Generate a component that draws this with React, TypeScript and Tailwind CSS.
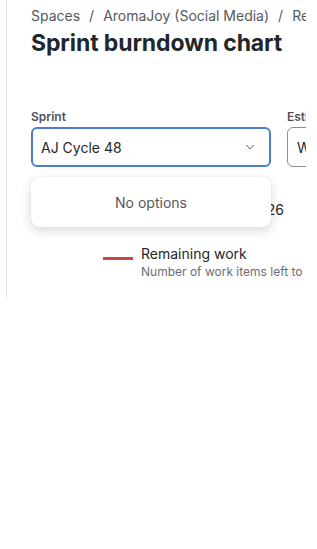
import React from 'react';
import { ChevronDown } from 'lucide-react';

export default function App() {
  return (
    <div className="w-[317px] h-[549px] bg-white overflow-hidden font-['Inter',sans-serif]">
      <div className="ml-[6px] w-[300px] h-[298px] border-l border-[#e4e4e4] overflow-hidden">
        <div className="w-[520px] pl-[24px] pt-[6px]">
          <nav className="flex items-center gap-[9px] text-[14px] leading-[20px] text-[#55595e] whitespace-nowrap">
            <span>Spaces</span>
            <span>/</span>
            <span>AromaJoy (Social Media)</span>
            <span>/</span>
            <span>Reports</span>
          </nav>
          <h1 className="mt-[1px] text-[23px] leading-[32px] font-bold text-[#22272b] tracking-[-0.1px]">
            Sprint burndown chart
          </h1>

          <div className="mt-[50px] flex gap-[16px]">
            <div className="w-[240px] relative">
              <label className="block text-[12px] leading-[16px] font-semibold text-[#505258]">Sprint</label>
              <div className="mt-[2px] h-[40px] rounded-[6px] border-2 border-[#4c7ccb] flex items-center justify-between pl-[8px] pr-[12px]">
                <span className="text-[14px] text-[#22272b]">AJ Cycle 48</span>
                <ChevronDown className="w-[14px] h-[14px] text-[#6b6e76]" strokeWidth={1.75} />
              </div>
              <div className="absolute left-0 top-[68px] w-[240px] h-[50px] rounded-[8px] bg-white shadow-[0_4px_12px_rgba(0,0,0,0.15),0_0_1px_rgba(0,0,0,0.18)] flex items-center justify-center z-10">
                <span className="text-[14px] text-[#55595e]">No options</span>
              </div>
            </div>
            <div className="w-[200px]">
              <label className="block text-[12px] leading-[16px] font-semibold text-[#505258]">Estimation</label>
              <div className="mt-[2px] h-[40px] rounded-[6px] border border-[#8c8f97] flex items-center pl-[9px]">
                <span className="text-[14px] text-[#22272b]">Work items</span>
              </div>
            </div>
          </div>

          <div className="mt-[33px] w-[253px] text-right text-[14px] leading-[20px] text-[#22272b] whitespace-nowrap">
            Mar 13, 2026 – Mar 26
          </div>

          <div className="mt-[24px] pl-[72px] flex items-start gap-[8px]">
            <span className="mt-[13px] w-[30px] h-[3px] bg-[#c9484a]" />
            <div>
              <div className="text-[14px] leading-[20px] text-[#22272b]">Remaining work</div>
              <div className="text-[12px] leading-[16px] text-[#6b6e76] whitespace-nowrap">Number of work items left to complete</div>
            </div>
          </div>
        </div>
      </div>
    </div>
  );
}
